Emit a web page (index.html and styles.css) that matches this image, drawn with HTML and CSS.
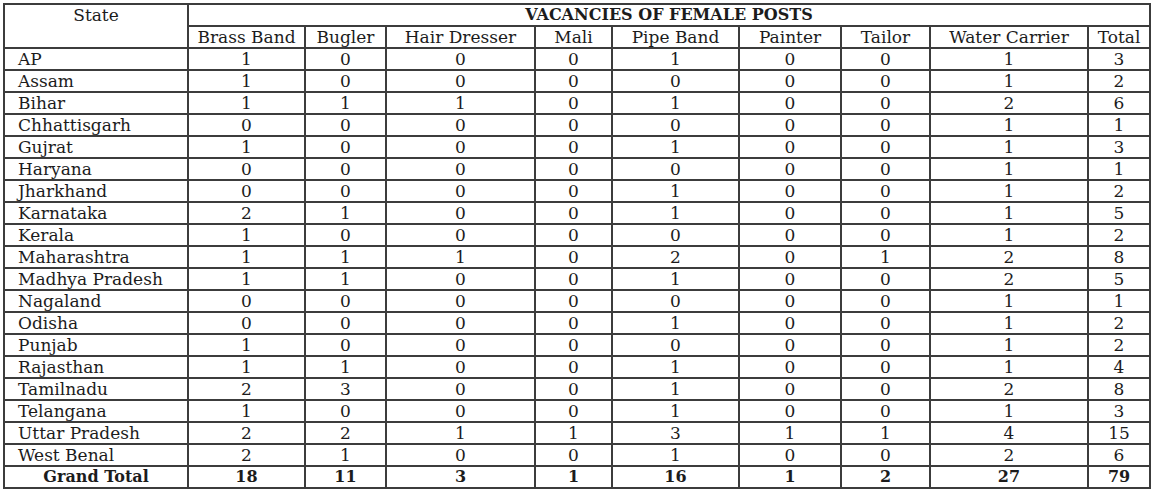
FILE: index.html
```html
<!DOCTYPE html>
<html>
<head>
<meta charset="utf-8">
<link rel="stylesheet" href="styles.css">
</head>
<body>
<table class="vac">
<colgroup>
<col class="c-state"><col class="c-brass"><col class="c-bugler"><col class="c-hair"><col class="c-mali"><col class="c-pipe"><col class="c-painter"><col class="c-tailor"><col class="c-water"><col class="c-total">
</colgroup>
<thead>
<tr><th class="state-h" rowspan="2">State</th><th class="title" colspan="9">VACANCIES OF FEMALE POSTS</th></tr>
<tr><th>Brass Band</th><th>Bugler</th><th>Hair Dresser</th><th>Mali</th><th>Pipe Band</th><th>Painter</th><th>Tailor</th><th>Water Carrier</th><th>Total</th></tr>
</thead>
<tbody>
<tr><td class="st">AP</td><td>1</td><td>0</td><td>0</td><td>0</td><td>1</td><td>0</td><td>0</td><td>1</td><td>3</td></tr>
<tr><td class="st">Assam</td><td>1</td><td>0</td><td>0</td><td>0</td><td>0</td><td>0</td><td>0</td><td>1</td><td>2</td></tr>
<tr><td class="st">Bihar</td><td>1</td><td>1</td><td>1</td><td>0</td><td>1</td><td>0</td><td>0</td><td>2</td><td>6</td></tr>
<tr><td class="st">Chhattisgarh</td><td>0</td><td>0</td><td>0</td><td>0</td><td>0</td><td>0</td><td>0</td><td>1</td><td>1</td></tr>
<tr><td class="st">Gujrat</td><td>1</td><td>0</td><td>0</td><td>0</td><td>1</td><td>0</td><td>0</td><td>1</td><td>3</td></tr>
<tr><td class="st">Haryana</td><td>0</td><td>0</td><td>0</td><td>0</td><td>0</td><td>0</td><td>0</td><td>1</td><td>1</td></tr>
<tr><td class="st">Jharkhand</td><td>0</td><td>0</td><td>0</td><td>0</td><td>1</td><td>0</td><td>0</td><td>1</td><td>2</td></tr>
<tr><td class="st">Karnataka</td><td>2</td><td>1</td><td>0</td><td>0</td><td>1</td><td>0</td><td>0</td><td>1</td><td>5</td></tr>
<tr><td class="st">Kerala</td><td>1</td><td>0</td><td>0</td><td>0</td><td>0</td><td>0</td><td>0</td><td>1</td><td>2</td></tr>
<tr><td class="st">Maharashtra</td><td>1</td><td>1</td><td>1</td><td>0</td><td>2</td><td>0</td><td>1</td><td>2</td><td>8</td></tr>
<tr><td class="st">Madhya Pradesh</td><td>1</td><td>1</td><td>0</td><td>0</td><td>1</td><td>0</td><td>0</td><td>2</td><td>5</td></tr>
<tr><td class="st">Nagaland</td><td>0</td><td>0</td><td>0</td><td>0</td><td>0</td><td>0</td><td>0</td><td>1</td><td>1</td></tr>
<tr><td class="st">Odisha</td><td>0</td><td>0</td><td>0</td><td>0</td><td>1</td><td>0</td><td>0</td><td>1</td><td>2</td></tr>
<tr><td class="st">Punjab</td><td>1</td><td>0</td><td>0</td><td>0</td><td>0</td><td>0</td><td>0</td><td>1</td><td>2</td></tr>
<tr><td class="st">Rajasthan</td><td>1</td><td>1</td><td>0</td><td>0</td><td>1</td><td>0</td><td>0</td><td>1</td><td>4</td></tr>
<tr><td class="st">Tamilnadu</td><td>2</td><td>3</td><td>0</td><td>0</td><td>1</td><td>0</td><td>0</td><td>2</td><td>8</td></tr>
<tr><td class="st">Telangana</td><td>1</td><td>0</td><td>0</td><td>0</td><td>1</td><td>0</td><td>0</td><td>1</td><td>3</td></tr>
<tr><td class="st">Uttar Pradesh</td><td>2</td><td>2</td><td>1</td><td>1</td><td>3</td><td>1</td><td>1</td><td>4</td><td>15</td></tr>
<tr><td class="st">West Benal</td><td>2</td><td>1</td><td>0</td><td>0</td><td>1</td><td>0</td><td>0</td><td>2</td><td>6</td></tr>
<tr class="grand"><td>Grand Total</td><td>18</td><td>11</td><td>3</td><td>1</td><td>16</td><td>1</td><td>2</td><td>27</td><td>79</td></tr>
</tbody>
</table>
</body>
</html>
```
FILE: styles.css
```css
html, body {
  margin: 0;
  padding: 0;
  background: #ffffff;
}
body {
  padding: 3px 0 0 3px;
}
.vac {
  border-collapse: collapse;
  table-layout: fixed;
  width: 1148px;
  font-family: "DejaVu Serif", "Liberation Serif", serif;
  font-size: 17px;
  color: #1c1c1c;
}
.vac th, .vac td {
  border: 2px solid #3c3c3c;
  padding: 0;
  height: 20px;
  line-height: 20px;
  text-align: center;
  font-weight: normal;
  white-space: nowrap;
  overflow: hidden;
}
.c-state { width: 184px; }
.c-brass { width: 117px; }
.c-bugler { width: 81px; }
.c-hair { width: 149px; }
.c-mali { width: 77px; }
.c-pipe { width: 127px; }
.c-painter { width: 102px; }
.c-tailor { width: 89px; }
.c-water { width: 158px; }
.c-total { width: 62px; }
.vac th.state-h {
  vertical-align: top;
}
.vac th.title {
  font-weight: bold;
  font-size: 16px;
}
.vac td.st {
  text-align: left;
  padding-left: 13px;
}
.vac tr.grand td {
  font-weight: bold;
  font-size: 16px;
}
```
